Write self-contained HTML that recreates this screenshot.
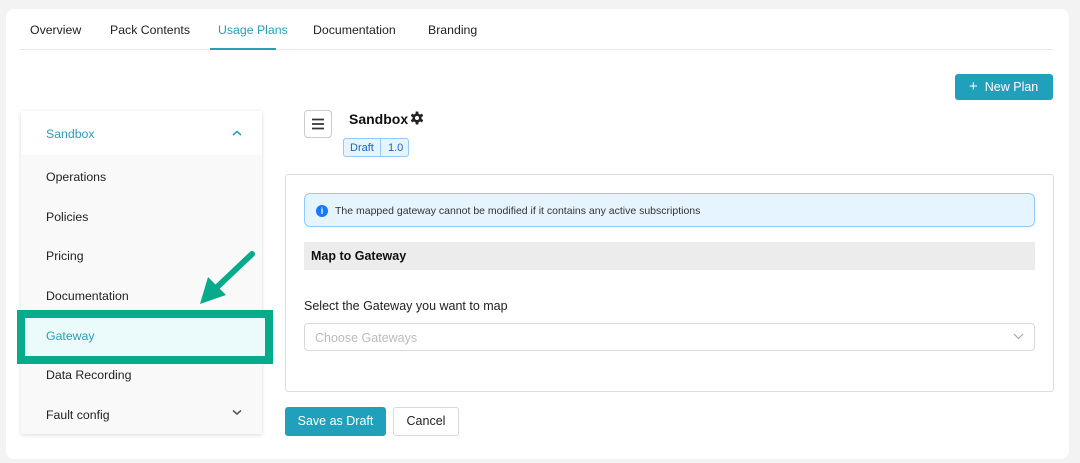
<!DOCTYPE html>
<html><head><style>
*{box-sizing:border-box;margin:0;padding:0}
body{width:1080px;height:463px;background:#f3f3f3;font-family:"Liberation Sans",sans-serif;font-size:12.5px;color:#222;position:relative;overflow:hidden}
.a{position:absolute}
.card{left:6px;top:9px;width:1063px;height:450px;background:#fff;border-radius:8px}
.tab{top:23px;font-size:12.3px;color:#222}
.item{left:46px;font-size:12.3px;color:#222}
</style></head><body>
<div class="a card"></div>
<div class="a tab" style="left:30px">Overview</div>
<div class="a tab" style="left:110px">Pack Contents</div>
<div class="a tab" style="left:218px;color:#2a9db8">Usage Plans</div>
<div class="a tab" style="left:313px">Documentation</div>
<div class="a tab" style="left:428px">Branding</div>
<div class="a" style="left:20px;top:49px;width:1033px;height:1px;background:#e8e8e8"></div>
<div class="a" style="left:210px;top:48px;width:66px;height:2px;background:#2a9db8"></div>

<div class="a" style="left:955px;top:74px;width:98px;height:26px;background:#21a0bb;border-radius:3px;color:#fff;font-size:12.5px;line-height:26px;padding-left:14px"><span style="font-size:15px;margin-right:7px">+</span>New Plan</div>

<div class="a" style="left:21px;top:111px;width:241px;height:323px;background:#f9f9f9;box-shadow:0 1px 4px rgba(0,0,0,.15)"></div>
<div class="a" style="left:21px;top:111px;width:241px;height:44px;background:#fff"></div>
<div class="a item" style="top:127px;color:#2a9db8">Sandbox</div>
<svg class="a" style="left:232px;top:130px" width="10" height="7"><path d="M1 5L5 1.5L9 5" stroke="#2a9db8" stroke-width="1.5" fill="none"/></svg>
<div class="a item" style="top:170px">Operations</div>
<div class="a item" style="top:210px">Policies</div>
<div class="a item" style="top:249px">Pricing</div>
<div class="a item" style="top:289px">Documentation</div>
<div class="a" style="left:21px;top:314px;width:248px;height:46px;background:#ebfbfb"></div>
<div class="a" style="left:17px;top:310px;width:256px;height:54px;border:8px solid #07ab8b"></div>
<div class="a item" style="top:329px;color:#2a9db8">Gateway</div>
<div class="a item" style="top:368px">Data Recording</div>
<div class="a item" style="top:408px">Fault config</div>
<svg class="a" style="left:232px;top:409px" width="10" height="7"><path d="M1 1.5L5 5L9 1.5" stroke="#555" stroke-width="1.5" fill="none"/></svg>
<svg class="a" style="left:190px;top:245px" width="75" height="65"><path d="M62 9L24 45" stroke="#07ab8b" stroke-width="6" stroke-linecap="round"/><path d="M10 59L18 32L36 50Z" fill="#07ab8b"/></svg>

<div class="a" style="left:304px;top:110px;width:28px;height:28px;border:1px solid #ccc;border-radius:4px"></div>
<svg class="a" style="left:311px;top:117px" width="14" height="14"><path d="M1 2.5H13M1 7H13M1 11.5H13" stroke="#333" stroke-width="1.7"/></svg>
<div class="a" style="left:349px;top:111px;font-weight:bold;font-size:14px;color:#111">Sandbox</div>
<svg class="a" style="left:410px;top:111px" width="14" height="14" viewBox="0 0 14 14"><g fill="#222"><circle cx="7" cy="7" r="4.6"/><rect x="5.6" y="0.5" width="2.8" height="13" rx=".6"/><rect x="5.6" y="0.5" width="2.8" height="13" rx=".6" transform="rotate(60 7 7)"/><rect x="5.6" y="0.5" width="2.8" height="13" rx=".6" transform="rotate(120 7 7)"/></g><circle cx="7" cy="7" r="2" fill="#fff"/></svg>
<div class="a" style="left:343px;top:138px;width:66px;height:19px;background:#e6f4ff;border:1px solid #91caff;border-radius:3px;font-size:11px;color:#1565c0;line-height:18px"><span style="padding-left:6px">Draft</span><span style="position:absolute;left:36px;top:0;height:17px;border-left:1px solid #91caff;padding-left:7px">1.0</span></div>

<div class="a" style="left:285px;top:174px;width:769px;height:218px;border:1px solid #ddd;border-radius:3px"></div>
<div class="a" style="left:304px;top:193px;width:731px;height:34px;background:#e6f4ff;border:1px solid #91caff;border-radius:6px"></div>
<div class="a" style="left:316px;top:205px;width:12px;height:12px;border-radius:50%;background:#1677ff;color:#fff;font-size:9px;font-weight:bold;text-align:center;line-height:12px">i</div>
<div class="a" style="left:335px;top:205px;font-size:10.5px;color:#333">The mapped gateway cannot be modified if it contains any active subscriptions</div>
<div class="a" style="left:304px;top:242px;width:731px;height:28px;background:#ececec"></div>
<div class="a" style="left:311px;top:249px;font-weight:bold;font-size:12.5px;color:#111">Map to Gateway</div>
<div class="a" style="left:304px;top:299px;font-size:12.5px;color:#222">Select the Gateway you want to map</div>
<div class="a" style="left:304px;top:323px;width:731px;height:28px;border:1px solid #d9d9d9;border-radius:4px"></div>
<div class="a" style="left:315px;top:331px;font-size:12.5px;color:#bbb">Choose Gateways</div>
<svg class="a" style="left:1013px;top:333px" width="11" height="7"><path d="M1 1L5.5 5.5L10 1" stroke="#aaa" stroke-width="1.2" fill="none"/></svg>

<div class="a" style="left:285px;top:407px;width:101px;height:29px;background:#21a0bb;border-radius:3px;color:#fff;text-align:center;line-height:29px;font-size:12.5px">Save as Draft</div>
<div class="a" style="left:393px;top:407px;width:66px;height:29px;border:1px solid #d9d9d9;border-radius:3px;text-align:center;line-height:27px;font-size:12.5px">Cancel</div>
</body></html>
